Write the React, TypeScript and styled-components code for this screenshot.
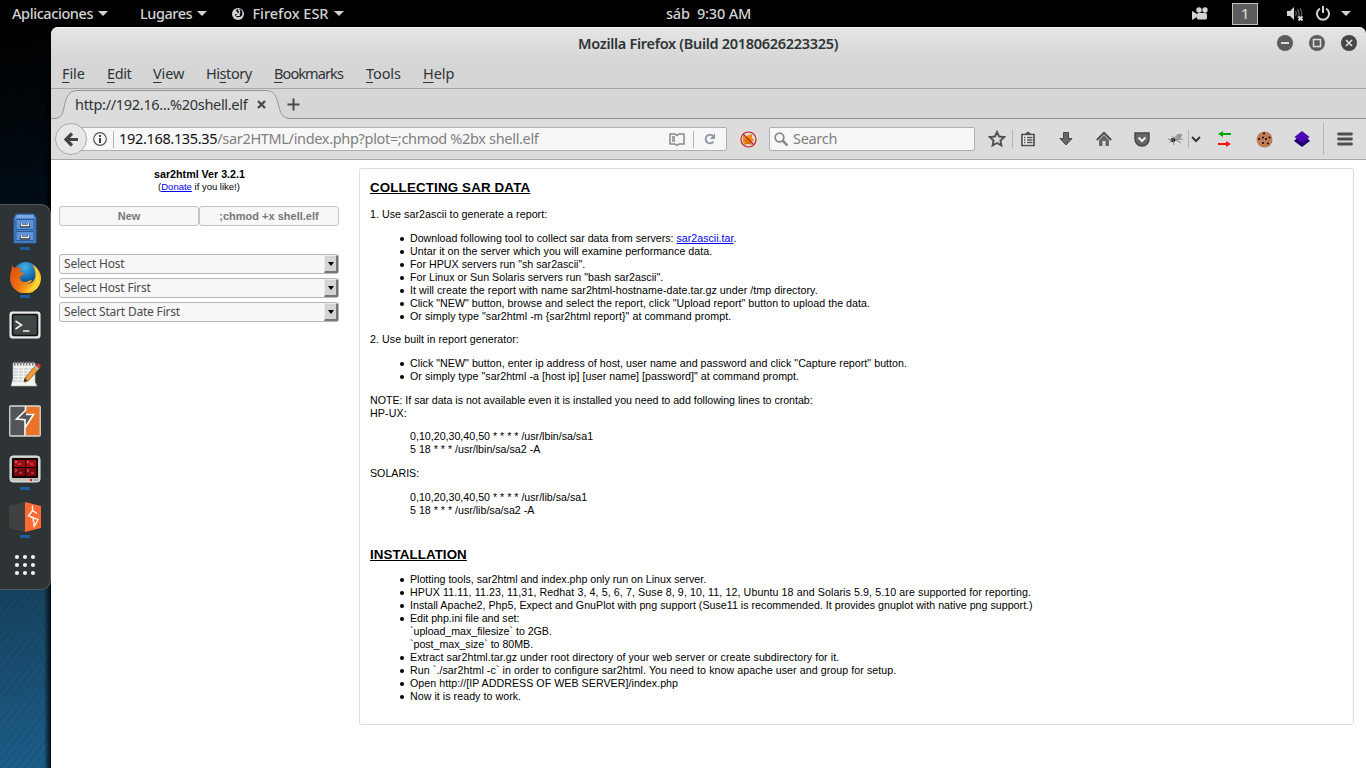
import React from "react";
import styled, { createGlobalStyle } from "styled-components";

const ui = `"Noto Sans", "Open Sans", sans-serif`;

const GlobalStyle = createGlobalStyle`
  * { box-sizing: border-box; }
  body { margin: 0; background: #000; overflow: hidden; }
`;

const Screen = styled.div`
  width: 1366px;
  height: 768px;
  display: flex;
  flex-direction: column;
  background: #000;
  font-family: ${ui};
  overflow: hidden;
`;

const Label = styled.span<{ $ls?: number; $size?: number; $lift?: number }>`
  font-size: ${(p) => p.$size ?? 14.5}px;
  letter-spacing: ${(p) => p.$ls ?? 0}px;
  margin-bottom: ${(p) => p.$lift ?? 2}px;
  line-height: 20px;
  white-space: pre;
`;

/* ---------- Desktop top bar ---------- */
const TopBar = styled.header`
  height: 27px;
  flex: none;
  display: flex;
  align-items: center;
  color: #d3d3d3;
  font-weight: 500;
`;
const TopItem = styled.div<{ $w: number; $pl?: number }>`
  width: ${(p) => p.$w}px;
  padding-left: ${(p) => p.$pl ?? 0}px;
  height: 26px;
  display: flex;
  align-items: center;
  flex: none;
`;
const Caret = styled.i<{ $ml?: number }>`
  margin-left: ${(p) => p.$ml ?? 5}px;
  border: 5px solid transparent;
  border-top-color: #d3d3d3;
  border-bottom: 0;
`;
const Workspace = styled.div`
  width: 26px;
  height: 22px;
  border: 1px solid #c0c0c0;
  background: #5c5c5c;
  display: flex;
  align-items: center;
  justify-content: center;
`;

/* ---------- Desktop area ---------- */
const Desktop = styled.div`
  flex: 1;
  display: flex;
  min-height: 0;
`;
const Wallpaper = styled.aside`
  width: 51px;
  flex: none;
  padding-top: 177px;
  background:
    linear-gradient(90deg, transparent 44px, rgba(0, 0, 0, 0.85) 51px),
    repeating-linear-gradient(128deg, rgba(0, 0, 0, 0.05) 0 3px, transparent 3px 6px),
    linear-gradient(172deg, #000 0, #00060a 90px, #010d17 180px, #0a2436 320px, #174461 570px, #1c5f8c 745px);
`;
const Dock = styled.nav`
  width: 51px;
  height: 386px;
  background: #2e3436;
  border: 1px solid #565a58;
  border-left: 0;
  border-radius: 0 10px 10px 0;
`;
const DockSlot = styled.div`
  height: 48px;
  width: 50px;
  padding-top: 8px;
  display: flex;
  flex-direction: column;
  align-items: center;
  svg { display: block; flex: none; }
`;
const Running = styled.i`
  width: 10px;
  height: 3px;
  margin-top: 2px;
  background: #215d9c;
`;

/* ---------- Window ---------- */
const Window = styled.main`
  flex: 1;
  display: flex;
  flex-direction: column;
  border-radius: 7px 7px 0 0;
  overflow: hidden;
  background: #d6d6d6;
  color: #2e3436;
`;
const TitleBar = styled.div`
  height: 33px;
  flex: none;
  display: flex;
  align-items: center;
  padding: 0 9px 2px 527px;
  border-top: 1px solid #f4f4f4;
  background: linear-gradient(#e4e4e4, #d6d6d6);
  font-weight: 600;
`;
const WindowButtons = styled.div`
  margin-left: auto;
  display: flex;
  gap: 16px;
  svg { display: block; }
`;
const MenuBar = styled.div`
  height: 29px;
  flex: none;
  display: flex;
  align-items: center;
  padding-left: 11px;
  border-bottom: 1px solid #a6a6a6;
`;
const MenuItem = styled(Label)<{ $w: number }>`
  width: ${(p) => p.$w}px;
  u { text-underline-offset: 3px; text-decoration-thickness: 1px; }
`;
const TabStrip = styled.div`
  height: 30px;
  flex: none;
  display: flex;
  position: relative;
  background: #d6d6d6;
`;
const TabShape = styled.svg`
  position: absolute;
  left: 0;
  top: 0;
`;
const Tab = styled.div`
  position: relative;
  width: 236px;
  padding: 1px 0 0 24px;
  display: flex;
  align-items: center;
  svg { margin-left: auto; margin-right: 21px; }
`;
const NewTab = styled.div`
  position: relative;
  display: flex;
  align-items: center;
`;
const Toolbar = styled.div`
  height: 41px;
  flex: none;
  display: flex;
  align-items: center;
  background: #dcdcdc;
  border-bottom: 1px solid #a9a9a9;
  padding-left: 4px;
`;
const BackButton = styled.div`
  width: 32px;
  height: 32px;
  flex: none;
  border: 1px solid #aaa;
  border-radius: 50%;
  background: #e8e8e8;
  display: flex;
  align-items: center;
  justify-content: center;
  z-index: 1;
`;
const Field = styled.div<{ $w: number; $ml: number; $pl: number }>`
  width: ${(p) => p.$w}px;
  margin-left: ${(p) => p.$ml}px;
  padding-left: ${(p) => p.$pl}px;
  height: 24px;
  flex: none;
  display: flex;
  align-items: center;
  border: 1px solid #b0b0b0;
  border-radius: 2px;
  background: #f7f7f7;
  color: #808080;
  svg { flex: none; }
`;
const ReaderIcon = styled.svg`
  margin-left: auto;
`;
const Host = styled.span`color: #111;`;
const Rule = styled.i<{ $h: number; $ml?: number; $mr?: number }>`
  width: 1px;
  height: ${(p) => p.$h}px;
  margin: 0 ${(p) => p.$mr ?? 0}px 0 ${(p) => p.$ml ?? 0}px;
  background: #b5b5b5;
  flex: none;
`;
const Tool = styled.div<{ $w: number }>`
  width: ${(p) => p.$w}px;
  display: flex;
  justify-content: center;
  flex: none;
  svg { display: block; flex: none; }
`;

/* ---------- Page ---------- */
const Page = styled.div`
  flex: 1;
  background: #fff;
  display: flex;
  align-items: flex-start;
  padding: 8px 12px 0 8px;
  gap: 20px;
  font-family: "Liberation Sans", Arial, sans-serif;
  font-size: 10.667px;
  line-height: 13px;
  color: #000;
  a { color: #00e; text-decoration: underline; }
`;
const Side = styled.div`
  width: 280px;
  flex: none;
  text-align: center;
`;
const Version = styled.div`
  font-weight: bold;
  font-size: 10.7px;
  line-height: 13px;
  padding-left: 1px;
`;
const Donate = styled.div`
  font-size: 9.5px;
  line-height: 12px;
`;
const ButtonRow = styled.div`
  display: flex;
  margin: 13px 0 28px;
`;
const PageButton = styled.div`
  width: 140px;
  height: 20px;
  border: 1px solid #c4c4c4;
  border-radius: 3px;
  background: #f7f7f7;
  color: #777;
  font-size: 11px;
  font-weight: bold;
  line-height: 19px;
`;
const Select = styled.div`
  height: 20px;
  margin-bottom: 4px;
  border: 1px solid #b8b8b8;
  border-radius: 3px;
  background: #f7f7f7;
  color: #4c4c4c;
  display: flex;
  justify-content: space-between;
  align-items: center;
  padding-left: 4px;
  font-family: ${ui};
`;
const Arrow = styled.div`
  width: 14px;
  height: 18px;
  background: #d4d4d4;
  border: solid;
  border-width: 1px 2px 2px 1px;
  border-color: #eee #777 #777 #eee;
  display: flex;
  align-items: center;
  justify-content: center;
  &::after {
    content: "";
    border: 3.5px solid transparent;
    border-top: 4px solid #000;
    border-bottom: 0;
  }
`;
const Article = styled.article`
  flex: 1;
  height: 557px;
  border: 1px solid #ddd;
  border-radius: 3px;
  padding: 11px 10px 10px;
  p { margin: 0 0 10.667px; }
`;
const Heading = styled.h1<{ $mt?: number; $mb: number; $ls: number }>`
  margin: ${(p) => p.$mt ?? 0}px 0 ${(p) => p.$mb}px;
  font-size: 13.333px;
  line-height: 16px;
  letter-spacing: ${(p) => p.$ls}px;
  text-decoration: underline;
`;
const Line = styled.span<{ $ls: number }>`
  letter-spacing: ${(p) => p.$ls}px;
`;
const List = styled.ul`
  margin: 0 0 10.667px;
  padding: 0 0 0 40px;
  list-style: none;
`;
const Item = styled.li<{ $ls?: number }>`
  position: relative;
  letter-spacing: ${(p) => p.$ls ?? 0}px;
  &::before {
    content: "";
    position: absolute;
    left: -10px;
    top: 5px;
    width: 4px;
    height: 4px;
    border-radius: 50%;
    background: #000;
  }
`;
const Quote = styled.div`
  margin: 0 0 10.667px 40px;
`;

/* ---------- Dock icons ---------- */
const Cabinet = () => (
  <svg width="24" height="32" viewBox="0 0 24 32">
    <path d="M3 1h18l2 4v25H1V5z" fill="#4a83cf" stroke="#2f5f9f" />
    <path d="M4 2h16l1 3H3z" fill="#7ba8e2" />
    <path d="M3 6.500h18v10H3zM3 18.500h18v9H3z" fill="#5b93dc" stroke="#2c5c9c" />
    <path d="M8.500 10v3h7v-3M8.500 22v3h7v-3" fill="none" stroke="#333" strokeWidth="3" />
    <path d="M8.500 10v2.500h7V10M8.500 22v2.500h7V22" fill="none" stroke="#eee" strokeWidth="1.500" />
  </svg>
);
const Firefox = () => (
  <svg width="32" height="32" viewBox="0 0 32 32">
    <defs>
      <radialGradient id="globe" cx=".45" cy=".2" r=".8"><stop offset="0" stopColor="#3fb3e8" /><stop offset=".6" stopColor="#1362a8" /><stop offset="1" stopColor="#0a2b66" /></radialGradient>
      <linearGradient id="fox" x1="0" y1="0" x2="1" y2=".6"><stop offset="0" stopColor="#d64a12" /><stop offset=".55" stopColor="#ee7413" /><stop offset="1" stopColor="#ffd92e" /></linearGradient>
    </defs>
    <circle cx="17" cy="14" r="13" fill="url(#globe)" />
    <path d="M3 4c1 1 2 3 3 3 2-1 5-1 7 0-1 1-2 2-2 4l4 1c0 2-3 2-4 4 0 3 2 5 5 5 3 0 4-2 7-2-1 3-4 4-6 4 7 1 11-6 9-14-1-3-3-5-5-6 7 2 11 8 11 14a15.500 15.500 0 0 1-31 0C1 12 3 9 3 4z" fill="url(#fox)" />
    <path d="M24 4c6 4 8 11 5 18-2 5-8 9-14 8 7-1 12-6 12-13 0-5-1-9-3-13z" fill="#ffdd3a" opacity=".8" />
  </svg>
);
const Terminal = () => (
  <svg width="32" height="32" viewBox="0 0 32 32">
    <rect x="1" y="3" width="30" height="26" rx="2" fill="#dededb" stroke="#f5f5f5" />
    <rect x="3.500" y="5.500" width="25" height="21" rx="1.500" fill="#404545" stroke="#111" strokeWidth="1.500" />
    <path d="M6.500 12l6 4-6 4M14 22h6.500" fill="none" stroke="#eee" strokeWidth="1.600" />
  </svg>
);
const Notes = () => (
  <svg width="32" height="32" viewBox="0 0 32 32">
    <path d="M4 6h22v19l2 4H2l2-7z" fill="#f2f2ef" stroke="#bbb" strokeWidth=".6" />
    <path d="M5 6.500h21" stroke="#777" strokeWidth="4" strokeDasharray="1.500 1.500" />
    <path d="M5 12h19M5 15h18M5 18h15M5 21h12M4 24h10" stroke="#bbb" strokeDasharray="4 1" />
    <path d="M27 8l4 3-12 13-4 1 1-4z" fill="#f39b38" stroke="#85501c" strokeWidth=".7" />
    <path d="M26 9l2.500-2.500c2-.5 4 1.500 3 3L29 12z" fill="#d7342b" />
    <path d="M25 10l1.500-1.500 3.500 3L28.500 13z" fill="#a9bdd3" />
    <path d="M16 21l-1.500 4 4-1z" fill="#333" />
  </svg>
);
const Burp = () => (
  <svg width="32" height="32" viewBox="0 0 32 32">
    <rect x="1" y="1" width="30" height="30" fill="#555558" />
    <path d="M16 1h15v30H17v-9l8-13h-8z" fill="#e8742a" />
    <path d="M16.500 1v4.500L7.500 14l8.500.7V31M16.500 22l8-12.500h-7.500" fill="none" stroke="#fff" strokeWidth="1.600" />
    <rect x=".75" y="1" width="30.500" height="30" rx="1" fill="none" stroke="#d8d8d5" strokeWidth="1.300" />
  </svg>
);
const RedTerminal = () => (
  <svg width="32" height="32" viewBox="0 0 32 32">
    <rect x="1" y="3" width="30" height="26" rx="3" fill="#c5c5bf" stroke="#e8e8e5" />
    <rect x="3" y="5" width="26" height="20" rx="1" fill="#130404" />
    <path d="M5 7h11v7H5zM17 7h10v7H17z" fill="#a50d13" /><path d="M5 15h11v8H5zM17 15h10v8H17z" fill="#7d090d" />
    <path d="M6 8l2 1-2 1M9 11h3M18 8l2 1-2 1M21 11h3M6 16l2 1.500L6 19M10 20h3M18 16l2 1.500-2 1.500M22 20h3" stroke="#e59a9d" fill="none" strokeWidth=".7" />
    <circle cx="22" cy="27" r="1.200" fill="#e11" /><path d="M25 27h4" stroke="#888" />
  </svg>
);
const BurpCube = () => (
  <svg width="34" height="32" viewBox="0 0 34 32">
    <path d="M1 5l16-4v30L1 27z" fill="#414141" />
    <path d="M17 1l16 4v22l-16 4z" fill="#ff6a33" />
    <path d="M24.500 4.500v5L20.500 15l5 1.500-.5 4M24.500 9.500l4.500 3M22 16l8 2.500-4 7.500v-5.500" fill="none" stroke="#fff" strokeWidth="1.300" />
  </svg>
);
const Apps = () => (
  <svg width="32" height="32" viewBox="0 0 32 32" fill="#eee">
    {[8, 16, 24].map((y) => [8, 16, 24].map((x) => <circle key={`${x}-${y}`} cx={x} cy={y} r="2.100" />))}
  </svg>
);

const dock: { icon: React.ReactNode; running?: boolean }[] = [
  { icon: <Cabinet />, running: true },
  { icon: <Firefox />, running: true },
  { icon: <Terminal /> },
  { icon: <Notes /> },
  { icon: <Burp /> },
  { icon: <RedTerminal />, running: true },
  { icon: <BurpCube />, running: true },
  { icon: <Apps /> },
];

const menus: [string, string, string, number, number][] = [
  ["", "F", "ile", 45, -0.1],
  ["", "E", "dit", 46, -0.4],
  ["", "V", "iew", 53, -0.1],
  ["Hi", "s", "tory", 68, -0.45],
  ["", "B", "ookmarks", 92, -0.9],
  ["", "T", "ools", 57, -0.1],
  ["", "H", "elp", 50, -0.1],
];

const WinButton = ({ fill, children }: { fill: string; children: React.ReactNode }) => (
  <svg width="16" height="16" viewBox="0 0 16 16">
    <circle cx="8" cy="8" r="8" fill={fill} />
    {children}
  </svg>
);

export default function App() {
  return (
    <Screen>
      <GlobalStyle />
      <TopBar>
        <TopItem $w={128} $pl={12}><Label $ls={-0.42}>Aplicaciones</Label><Caret /></TopItem>
        <TopItem $w={103} $pl={12}><Label $ls={-0.45}>Lugares</Label><Caret /></TopItem>
        <TopItem $w={435}>
          <svg width="14" height="14" viewBox="0 0 14 14">
            <circle cx="7" cy="7" r="6" fill="#d3d3d3" />
            <path d="M5 3c2-2 5-1 6 1 1 3 0 6-3 6C5 11 4 9 4 7l3 .5C8 6 6 6 6 5z" fill="#000" />
            <path d="M7 2.500c2 1 2 3 1 4l-2 2 3-.5" stroke="#d3d3d3" fill="none" strokeWidth="1.500" />
          </svg>
          <Label $ls={-0.03}>{"  Firefox ESR"}</Label><Caret />
        </TopItem>
        <TopItem $w={526}><Label $ls={-0.18}>{"sáb  9:30 AM"}</Label></TopItem>
        <TopItem $w={40}>
          <svg width="17" height="13" viewBox="0 0 17 13" fill="#d3d3d3">
            <circle cx="7" cy="3" r="2.700" /><circle cx="13" cy="3" r="2.700" /><rect x="5" y="6" width="10" height="6.500" rx="1.500" /><path d="M0 4l5 3v3l-5 3z" />
          </svg>
        </TopItem>
        <TopItem $w={54}><Workspace><Label $size={15}>1</Label></Workspace></TopItem>
        <TopItem $w={30}>
          <svg width="18" height="16" viewBox="0 0 18 16">
            <path d="M1 5h3l4-4v13l-4-4H1z" fill="#d3d3d3" />
            <path d="M9.500 5q1.500 2.500 0 5M11.500 3q3 4.500 0 9M14 2q3.500 6 0 11" stroke="#555" fill="none" strokeWidth="1.400" />
            <path d="M12.500 10.500l4 4m0-4l-4 4" stroke="#ddd" strokeWidth="1.800" />
          </svg>
        </TopItem>
        <TopItem $w={50}>
          <svg width="14" height="15" viewBox="0 0 14 15" fill="none" stroke="#d3d3d3" strokeWidth="2">
            <path d="M4 2.500a6 6 0 1 0 6 0M7 0v7" />
          </svg>
          <Caret $ml={11} />
        </TopItem>
      </TopBar>
      <Desktop>
        <Wallpaper>
          <Dock>
            {dock.map((d, i) => <DockSlot key={i}>{d.icon}{d.running && <Running />}</DockSlot>)}
          </Dock>
        </Wallpaper>
        <Window>
          <TitleBar>
            <Label $ls={-0.3} $lift={1}>Mozilla Firefox (Build 20180626223325)</Label>
            <WindowButtons>
              <WinButton fill="#5c5c5c"><path d="M4 8h8" stroke="#ddd" strokeWidth="2" /></WinButton>
              <WinButton fill="#5c5c5c"><path d="M4.500 4.500h7v7h-7z" fill="none" stroke="#ddd" strokeWidth="1.500" /></WinButton>
              <WinButton fill="#474747"><path d="M5 5l6 6m0-6l-6 6" stroke="#ddd" strokeWidth="1.700" /></WinButton>
            </WindowButtons>
          </TitleBar>
          <MenuBar>
            {menus.map(([a, b, c, w, ls]) => <MenuItem key={b + c} $w={w} $ls={ls}>{a}<u>{b}</u>{c}</MenuItem>)}
          </MenuBar>
          <TabStrip>
            <TabShape width="1315" height="30" viewBox="0 0 1315 30">
              <path d="M0 29.500h4C12 29 12 22 14 14 16 5 20 1.500 27 1.500h188c7 0 10 4 12 12.500 2 8 3 15 12 15.500h1076v1H0z" fill="#dcdcdc" />
              <path d="M0 29.500h4C12 29 12 22 14 14 16 5 20 1.500 27 1.500h188c7 0 10 4 12 12.500 2 8 3 15 12 15.500h1076" fill="none" stroke="#8f9499" />
            </TabShape>
            <Tab>
              <Label $ls={-0.31}>http://192.16...%20shell.elf</Label>
              <svg width="9" height="9" viewBox="0 0 9 9"><path d="M1 1l7 7m0-7l-7 7" stroke="#4a4a4a" strokeWidth="2.300" /></svg>
            </Tab>
            <NewTab><svg width="13" height="13" viewBox="0 0 13 13"><path d="M6.500 .5v12M.5 6.500h12" stroke="#4a4a4a" strokeWidth="2" /></svg></NewTab>
          </TabStrip>
          <Toolbar>
            <BackButton>
              <svg width="15" height="15" viewBox="0 0 15 15"><path d="M14 7.500H3M8 1.500l-6 6 6 6" fill="none" stroke="#444" strokeWidth="3.200" /></svg>
            </BackButton>
            <Field $w={648} $ml={-8} $pl={13}>
              <svg width="14" height="14" viewBox="0 0 14 14"><circle cx="7" cy="7" r="6.300" fill="none" stroke="#555" strokeWidth="1.200" /><path d="M7 6v5M7 3v2" stroke="#444" strokeWidth="2" /></svg>
              <Rule $h={17} $ml={6} $mr={5} />
              <Label $ls={-0.33}><Host>192.168.135.35</Host>/sar2HTML/index.php?plot=;chmod %2bx shell.elf</Label>
              <ReaderIcon width="16" height="13" viewBox="0 0 16 13"><path d="M1 1h5l2 1.500L10 1h5v10h-5l-2 1.500L6 11H1zM3 4h3M3 6h3M3 8h3" fill="none" stroke="#888" strokeWidth="1.500" /></ReaderIcon>
              <Rule $h={17} $ml={8} $mr={10} />
              <svg width="12" height="12" viewBox="0 0 12 12"><path d="M9 3A4.300 4.300 0 1 0 9.500 8.500" fill="none" stroke="#909baa" strokeWidth="2" /><path d="M11 0v6H6z" fill="#909baa" /></svg>
              <Rule $h={0} $ml={9} />
            </Field>
            <Tool $w={42}>
              <svg width="17" height="17" viewBox="0 0 17 17"><path d="M3 5l3 1 3-2 3-1v4l2 2-3 3 1 2-4-1-4 1-1-4z" fill="#f08a0a" /><path d="M5 9l2 1m1-3l2 2m-4 3h4" stroke="#8b5a11" /><circle cx="8.500" cy="8.500" r="7.500" fill="none" stroke="#c81e1e" strokeWidth="1.200" /><path d="M3 3l11 11" stroke="#c81e1e" strokeWidth="1.200" /></svg>
            </Tool>
            <Field $w={206} $ml={0} $pl={4}>
              <svg width="14" height="14" viewBox="0 0 14 14" fill="none" stroke="#888"><circle cx="5.500" cy="5.500" r="4.300" strokeWidth="1.800" /><path d="M8.500 8.500l5 5" strokeWidth="2.500" /></svg>
              <Rule $h={0} $ml={4} /><Label $ls={-0.3}>Search</Label>
            </Field>
            <Tool $w={44}><svg width="18" height="18" viewBox="0 0 18 18"><path d="M9 2l2.100 4.500 5 .6-3.700 3.400 1 5L9 13l-4.400 2.500 1-5L1.900 7.100l5-.6z" fill="none" stroke="#505050" strokeWidth="1.900" /></svg></Tool>
            <Rule $h={18} $ml={-7} />
            <Tool $w={30}><svg width="16" height="16" viewBox="0 0 16 16"><path d="M2 3.500h12v11H2z" fill="#f2f2f2" stroke="#505050" strokeWidth="1.700" /><path d="M4 3.500L8 .5l4 3z" fill="#505050" /><path d="M4 6.500h1.500M7 6.500h5.500M4 9h1.500M7 9h5.500M4 11.500h1.500M7 11.500h5.500" stroke="#505050" strokeWidth="1.300" /></svg></Tool>
            <Tool $w={45}><svg width="16" height="16" viewBox="0 0 16 16"><path d="M5.500 1.500h5v6H14l-6 6.500-6-6.500h3.500z" fill="#666" stroke="#484848" /></svg></Tool>
            <Tool $w={31}><svg width="16" height="16" viewBox="0 0 16 16"><path d="M3 9l5-5 5 5v6h-3.500v-5h-3v5H3z" fill="#666" /><path d="M.8 9L8 1.800 15.200 9" fill="none" stroke="#484848" strokeWidth="1.800" /></svg></Tool>
            <Tool $w={45}><svg width="16" height="15" viewBox="0 0 16 15"><path d="M1 1h14v6c0 4-3 7-7 7s-7-3-7-7z" fill="#666" stroke="#484848" strokeWidth="1.500" /><path d="M4.500 5.500L8 9l3.500-3.500" fill="none" stroke="#eee" strokeWidth="2" /></svg></Tool>
            <Tool $w={24}><svg width="16" height="14" viewBox="0 0 16 14"><ellipse cx="5" cy="8" rx="2.500" ry="2" fill="#111" /><path d="M0 7l4 1 7-6 3 1-7 5 8-1M1 11l4-4 1 6M4 4l4 4 5 3M9 3l4 2-3 2" stroke="#777" fill="none" strokeWidth=".8" /><path d="M6 6l5-4 3 2-6 4z" fill="#888" opacity=".6" /></svg></Tool>
            <Rule $h={18} />
            <Tool $w={14}><svg width="10" height="7" viewBox="0 0 10 7"><path d="M1 1l4 4 4-4" fill="none" stroke="#383838" strokeWidth="2" /></svg></Tool>
            <Tool $w={44}><svg width="14" height="16" viewBox="0 0 14 16"><path d="M0 3L5 0v2h8v2H5v2z" fill="#0aa50a" /><path d="M13 13l-5-3v2H0v2h8v2z" fill="#f01010" /></svg></Tool>
            <Tool $w={34}><svg width="17" height="17" viewBox="0 0 17 17"><circle cx="8.500" cy="8.500" r="8" fill="#c07d57" /><g fill="#180d08"><circle cx="8" cy="2.500" r="1.100" /><circle cx="3" cy="8" r="1.100" /><circle cx="7" cy="6.500" r="1.100" /><circle cx="10" cy="8" r="1.100" /><circle cx="13.500" cy="6.500" r="1.100" /><circle cx="7" cy="12" r="1.100" /><circle cx="12" cy="12.500" r="1.100" /></g></svg></Tool>
            <Tool $w={42}><svg width="16" height="16" viewBox="0 0 16 16"><path d="M0 10l3-3h10l3 3-8 6z" fill="#22006e" /><path d="M8 0l7.500 6L8 12 .5 6z" fill="#4b07b4" /></svg></Tool>
            <Rule $h={32} />
            <Tool $w={42}><svg width="16" height="14" viewBox="0 0 16 14"><path d="M1.500 2h13M1.500 7h13M1.500 12h13" stroke="#505050" strokeWidth="2.800" strokeLinecap="round" /></svg></Tool>
          </Toolbar>
          <Page>
            <Side>
              <Version>sar2html Ver 3.2.1</Version>
              <Donate>(<a>Donate</a> if you like!)</Donate>
              <ButtonRow><PageButton>New</PageButton><PageButton>;chmod +x shell.elf</PageButton></ButtonRow>
              {["Select Host", "Select Host First", "Select Start Date First"].map((t) => (
                <Select key={t}><Label $size={12} $ls={-0.2} $lift={0}>{t}</Label><Arrow /></Select>
              ))}
            </Side>
            <Article>
              <Heading $mb={12} $ls={0.16}>COLLECTING SAR DATA</Heading>
              <p><Line $ls={0.05}>1. Use sar2ascii to generate a report:</Line></p>
              <List>
                <Item>Download following tool to collect sar data from servers: <a>sar2ascii.tar</a>.</Item>
                <Item $ls={0.03}>Untar it on the server which you will examine performance data.</Item>
                <Item $ls={0.02}>For HPUX servers run "sh sar2ascii".</Item>
                <Item $ls={0.02}>For Linux or Sun Solaris servers run "bash sar2ascii".</Item>
                <Item $ls={0.045}>It will create the report with name sar2html-hostname-date.tar.gz under /tmp directory.</Item>
                <Item $ls={0.03}>Click "NEW" button, browse and select the report, click "Upload report" button to upload the data.</Item>
                <Item $ls={0.06}>Or simply type "sar2html -m {"{sar2html report}"}" at command prompt.</Item>
              </List>
              <p><Line $ls={0.06}>2. Use built in report generator:</Line></p>
              <List>
                <Item $ls={0.038}>Click "NEW" button, enter ip address of host, user name and password and click "Capture report" button.</Item>
                <Item $ls={0.03}>Or simply type "sar2html -a [host ip] [user name] [password]" at command prompt.</Item>
              </List>
              <p><Line $ls={-0.028}>NOTE: If sar data is not available even it is installed you need to add following lines to crontab:</Line><br /><Line $ls={0.1}>HP-UX:</Line></p>
              <Quote>0,10,20,30,40,50 * * * * /usr/lbin/sa/sa1<br />5 18 * * * /usr/lbin/sa/sa2 -A</Quote>
              <p>SOLARIS:</p>
              <Quote>0,10,20,30,40,50 * * * * /usr/lib/sa/sa1<br />5 18 * * * /usr/lib/sa/sa2 -A</Quote>
              <Heading $mt={30} $mb={10.667} $ls={0.09}>INSTALLATION</Heading>
              <List>
                <Item $ls={-0.01}>Plotting tools, sar2html and index.php only run on Linux server.</Item>
                <Item $ls={0.09}>HPUX 11.11, 11.23, 11,31, Redhat 3, 4, 5, 6, 7, Suse 8, 9, 10, 11, 12, Ubuntu 18 and Solaris 5.9, 5.10 are supported for reporting.</Item>
                <Item $ls={0.016}>Install Apache2, Php5, Expect and GnuPlot with png support (Suse11 is recommended. It provides gnuplot with native png support.)</Item>
                <Item $ls={-0.03}>Edit php.ini file and set:<br />`upload_max_filesize` to 2GB.<br />`post_max_size` to 80MB.</Item>
                <Item $ls={0.048}>Extract sar2html.tar.gz under root directory of your web server or create subdirectory for it.</Item>
                <Item $ls={0.065}>Run `./sar2html -c` in order to configure sar2html. You need to know apache user and group for setup.</Item>
                <Item $ls={0.04}>Open http://[IP ADDRESS OF WEB SERVER]/index.php</Item>
                <Item $ls={0.04}>Now it is ready to work.</Item>
              </List>
            </Article>
          </Page>
        </Window>
      </Desktop>
    </Screen>
  );
}
